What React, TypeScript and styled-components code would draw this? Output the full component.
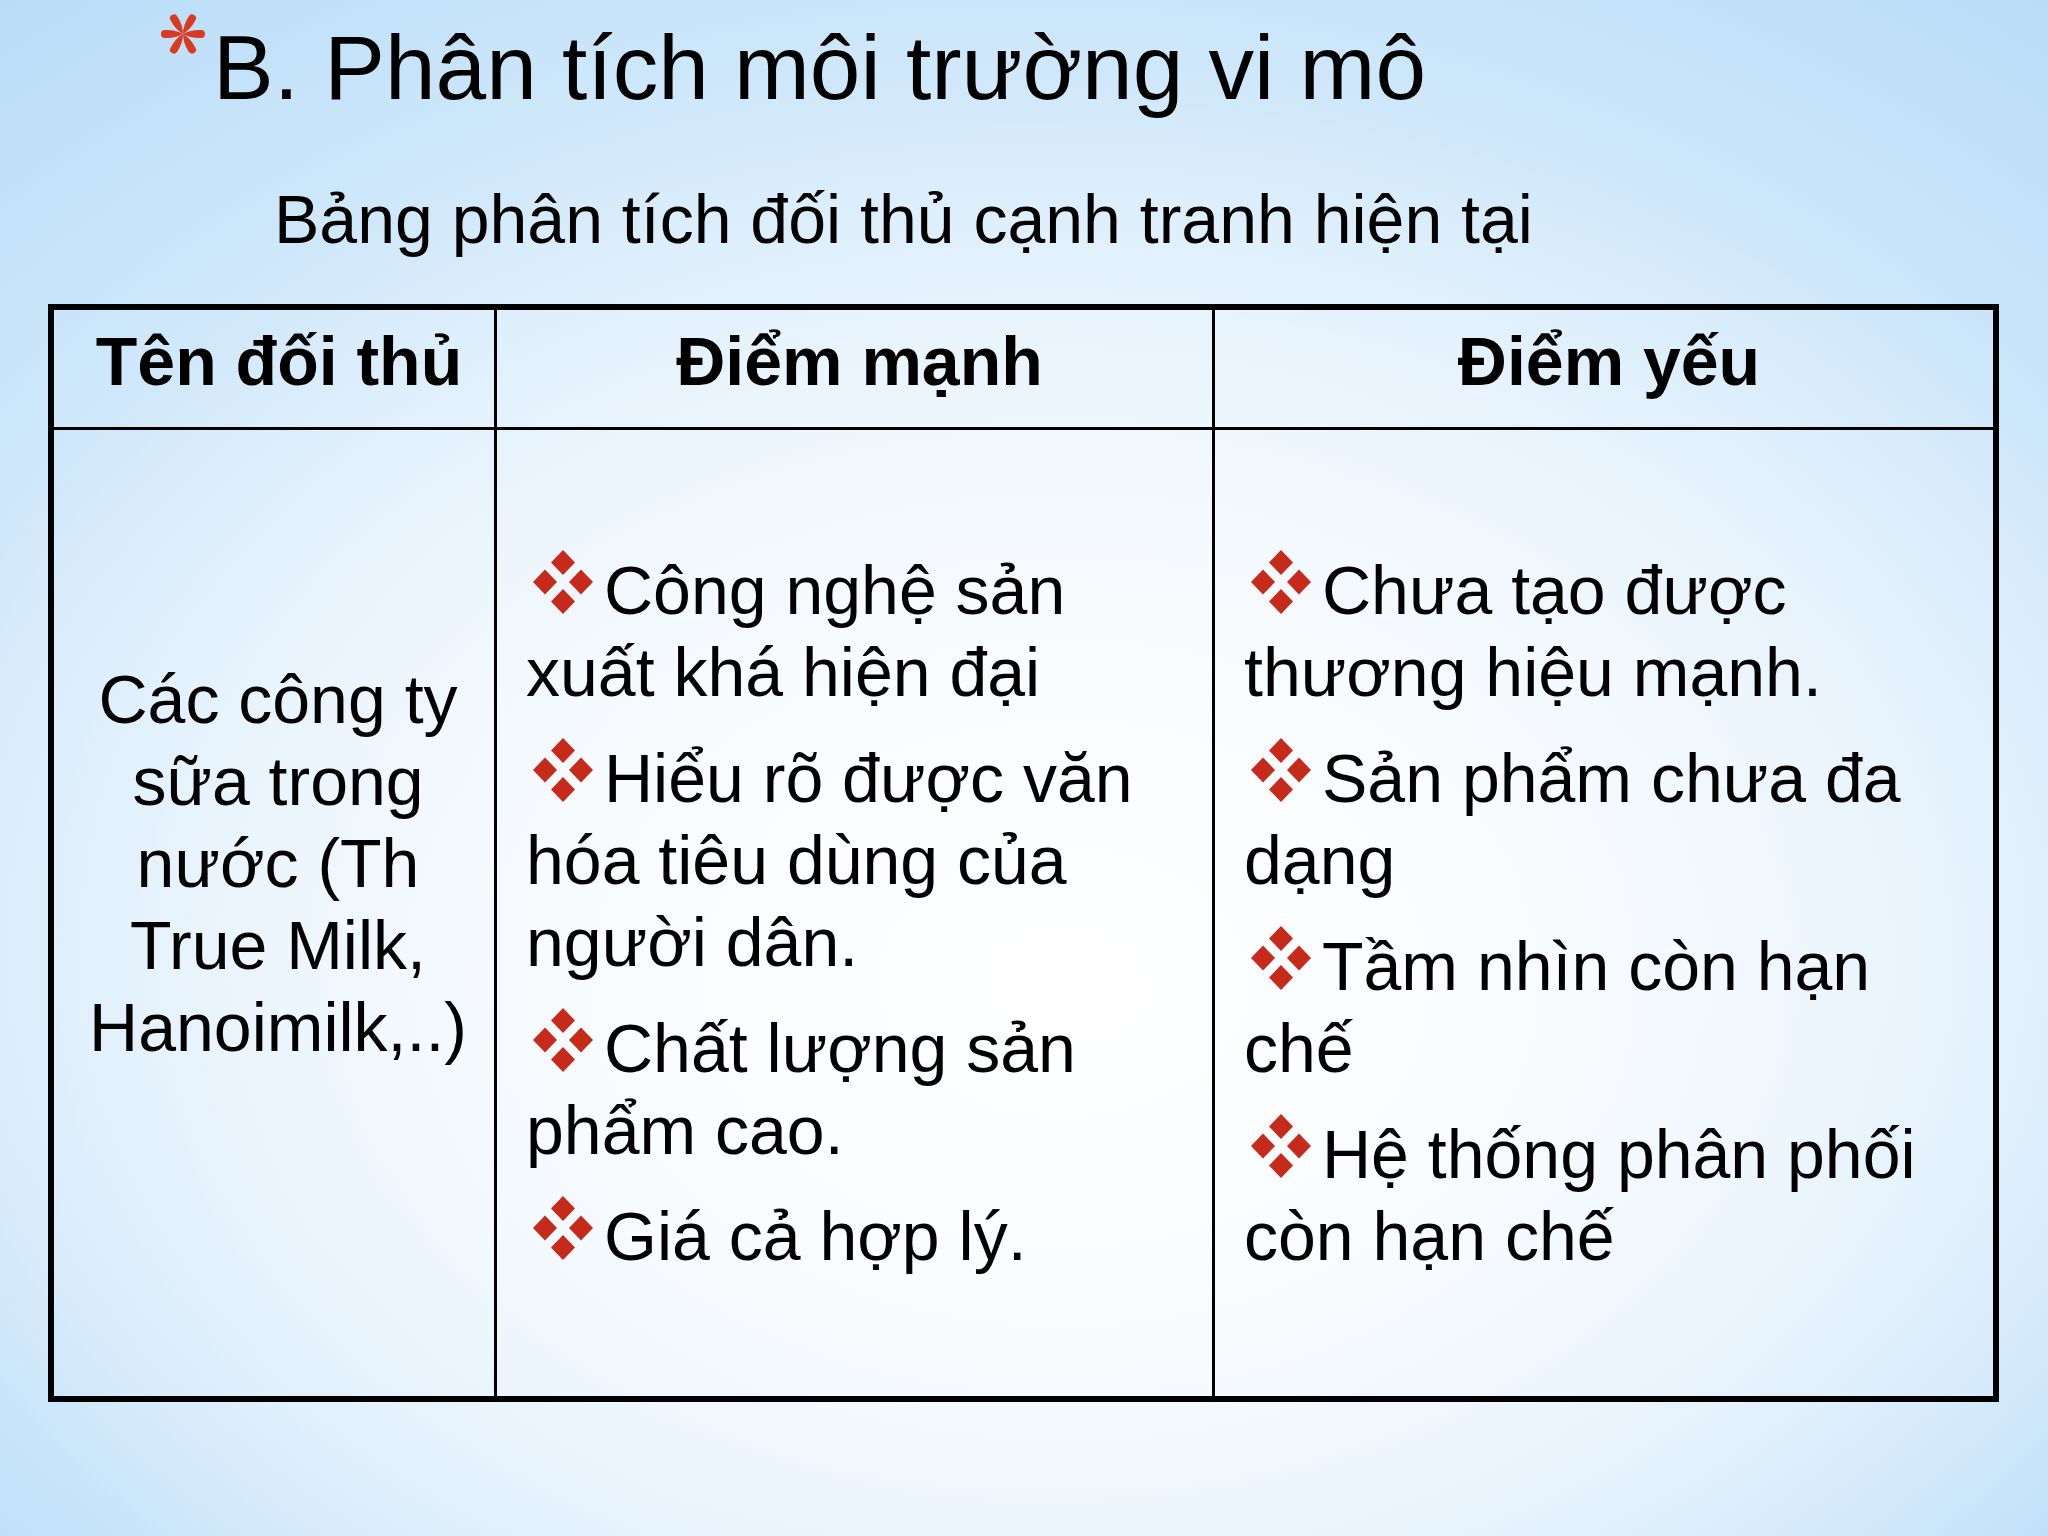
import React from 'react';
import styled, { createGlobalStyle } from 'styled-components';

const GlobalStyle = createGlobalStyle`
    html, body {
        margin: 0;
        padding: 0;
    }

    body {
        font-family: "Liberation Sans", Arial, sans-serif;
        color: #000;
    }

    * {
        box-sizing: border-box;
    }
`;

const strengths = [
    'Công nghệ sản xuất khá hiện đại',
    'Hiểu rõ được văn hóa tiêu dùng của người dân.',
    'Chất lượng sản phẩm cao.',
    'Giá cả hợp lý.',
];

const weaknesses = [
    'Chưa tạo được thương hiệu mạnh.',
    'Sản phẩm chưa đa dạng',
    'Tầm nhìn còn hạn chế',
    'Hệ thống phân phối còn hạn chế',
];

function Asterisk() {
    const petal = 'M0,0 Q7,-4 16.5,-3.6 A3.6,3.6 0 0 1 16.5,3.6 Q7,4 0,0 Z';
    return (
        <AsteriskIcon viewBox="-21 -21 42 42" width="46" height="46">
            {[0, 60, 120, 180, 240, 300].map((a) => (
                <path key={a} d={petal} transform={`rotate(${a})`} fill="#d93a22" />
            ))}
        </AsteriskIcon>
    );
}

function Bullet() {
    return (
        <BulletIcon viewBox="0 0 60 64" width="60" height="64">
            <polygon points="30,0 42,12.5 30,25 18,12.5" />
            <polygon points="12,19.5 24,32 12,44.5 0,32" />
            <polygon points="48,19.5 60,32 48,44.5 36,32" />
            <polygon points="30,39 42,51.5 30,64 18,51.5" />
        </BulletIcon>
    );
}

function App() {
    return (
        <Slide>
            <GlobalStyle />
            <TitleRow>
                <Asterisk />
                <Title>B. Phân tích môi trường vi mô</Title>
            </TitleRow>
            <Subtitle>Bảng phân tích đối thủ cạnh tranh hiện tại</Subtitle>

            <Table>
                <HeadCell>Tên đối thủ</HeadCell>
                <HeadCell>Điểm mạnh</HeadCell>
                <HeadCell $last>Điểm yếu</HeadCell>

                <NameCell>
                    Các công ty sữa trong nước (Th True Milk, Hanoimilk,..)
                </NameCell>
                <ListCell>
                    {strengths.map((s) => (
                        <Item key={s}>
                            <Bullet />
                            {s}
                        </Item>
                    ))}
                </ListCell>
                <ListCell $last>
                    {weaknesses.map((s) => (
                        <Item key={s}>
                            <Bullet />
                            {s}
                        </Item>
                    ))}
                </ListCell>
            </Table>
        </Slide>
    );
}

export default App;

const Slide = styled.div`
    width: 2048px;
    height: 1536px;
    overflow: hidden;
    background:
        radial-gradient(ellipse 60% 58% at 52% 64%, #ffffff 0%, #f8fbfe 42%, rgba(248, 251, 254, 0) 100%),
        radial-gradient(ellipse 90% 85% at 50% 56%, #f0f7fd 0%, #d2e9fb 58%, #acd6f6 100%);
`;

const TitleRow = styled.div`
    display: flex;
    align-items: flex-start;
    padding: 11px 0 0 160px;
`;

const AsteriskIcon = styled.svg`
    flex: none;
    margin-right: 7px;
`;

const Title = styled.h1`
    margin: 4px 0 0;
    font-size: 91px;
    font-weight: normal;
    line-height: 106px;
    white-space: nowrap;
`;

const Subtitle = styled.p`
    margin: 57px 0 0 274px;
    font-size: 68px;
    line-height: 82px;
    white-space: nowrap;
`;

const Table = styled.div`
    display: grid;
    grid-template-columns: 443px 718px 1fr;
    grid-template-rows: 120px 1fr;
    width: 1951px;
    height: 1098px;
    margin: 44px 0 0 48px;
    border: 6px solid #000;
`;

const HeadCell = styled.div<{ $last?: boolean }>`
    padding: 10px 0 0 10px;
    border-bottom: 3px solid #000;
    border-right: ${(p) => (p.$last ? 'none' : '3px solid #000')};
    font-size: 68px;
    font-weight: bold;
    line-height: 82px;
    text-align: center;
    white-space: nowrap;
`;

const NameCell = styled.div`
    display: flex;
    align-items: center;
    justify-content: center;
    padding: 0 8px 100px 16px;
    border-right: 3px solid #000;
    font-size: 68px;
    line-height: 82px;
    text-align: center;
`;

const ListCell = styled.div<{ $last?: boolean }>`
    display: flex;
    flex-direction: column;
    justify-content: center;
    gap: 24px;
    padding: 0 24px 0 29px;
    border-right: ${(p) => (p.$last ? 'none' : '3px solid #000')};
`;

const Item = styled.p`
    margin: 0;
    font-size: 68px;
    line-height: 82px;
`;

const BulletIcon = styled.svg`
    margin: 0 11px 0 7px;
    fill: #c62a1a;
`;
